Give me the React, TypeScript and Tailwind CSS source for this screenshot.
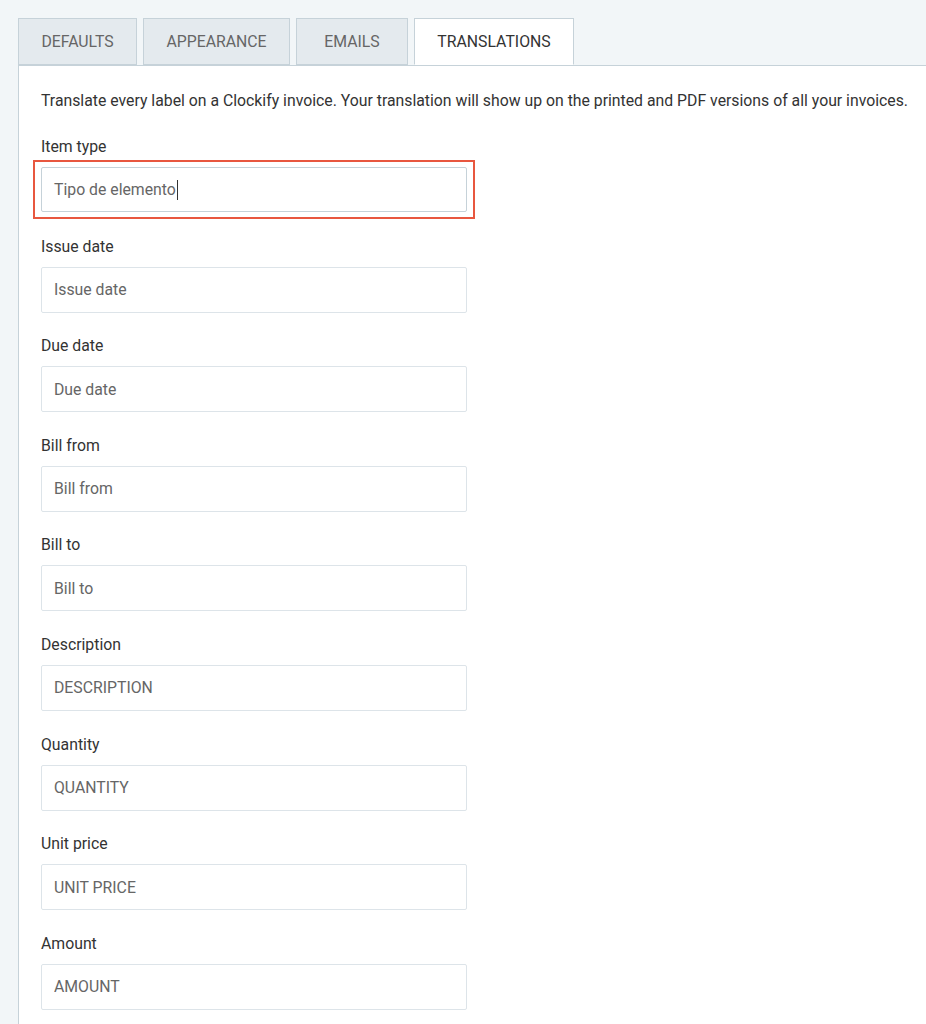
import React from 'react';

interface Field {
  label: string;
  value: string;
}

const fields: Field[] = [
  { label: 'Issue date', value: 'Issue date' },
  { label: 'Due date', value: 'Due date' },
  { label: 'Bill from', value: 'Bill from' },
  { label: 'Bill to', value: 'Bill to' },
  { label: 'Description', value: 'DESCRIPTION' },
  { label: 'Quantity', value: 'QUANTITY' },
  { label: 'Unit price', value: 'UNIT PRICE' },
  { label: 'Amount', value: 'AMOUNT' },
];

const tabs = [
  { name: 'DEFAULTS', width: 'w-[119px]' },
  { name: 'APPEARANCE', width: 'w-[147px]' },
  { name: 'EMAILS', width: 'w-[112px]' },
  { name: 'TRANSLATIONS', width: 'w-[160px]' },
];

const App: React.FC = () => {
  const active = 'TRANSLATIONS';

  return (
    <div className="min-h-screen bg-[#f2f6f8] pl-[18px] pt-[18px] font-['Roboto',sans-serif] text-[15.8px]">
      {/* tabs */}
      <div className="flex gap-[6px]">
        {tabs.map((tab) => (
          <button
            key={tab.name}
            className={`${tab.width} h-[47px] border border-[#c6d2d9] pt-px text-center text-[15.8px] ${
              active === tab.name
                ? 'relative z-10 -mb-px border-b-white bg-white text-[#333]'
                : 'bg-[#e4eaee] text-[#666]'
            }`}
          >
            {tab.name}
          </button>
        ))}
      </div>

      <div className="border-l border-t border-[#c6d2d9] bg-white pb-10 pl-[22px] pt-[25px]">
        <p className="leading-[20px] text-[#333]">
          Translate every label on a Clockify invoice. Your translation will show up on the printed and PDF versions of all your invoices.
        </p>

        <div className="mt-[26px] flex flex-col gap-[23.6px]">
          <div>
            <label className="block leading-[20px] text-[#333]">Item type</label>
            {/* highlighted field */}
            <div className="-mx-[8px] mt-[3px] w-fit border-2 border-[#e8573f] px-[6px] py-[5px]">
              <div className="flex h-[45px] w-[426px] items-center rounded-[2px] border border-[#c6d2d9] pl-[12px] text-[#666]">
                <span>Tipo de elemento</span>
                <span className="ml-px h-[20px] w-px bg-[#333]" />
              </div>
            </div>
          </div>

          {fields.map((field, i) => (
            <div key={field.label} className={i === 0 ? '-mt-[6px]' : ''}>
              <label className="block leading-[20px] text-[#333]">{field.label}</label>
              <input
                className="mt-[10px] block h-[46px] w-[426px] rounded-[2px] border border-[#dde4e9] bg-white pl-[12px] text-[#666] outline-none"
                defaultValue={field.value}
                readOnly
              />
            </div>
          ))}
        </div>
      </div>
    </div>
  );
};

export default App;
